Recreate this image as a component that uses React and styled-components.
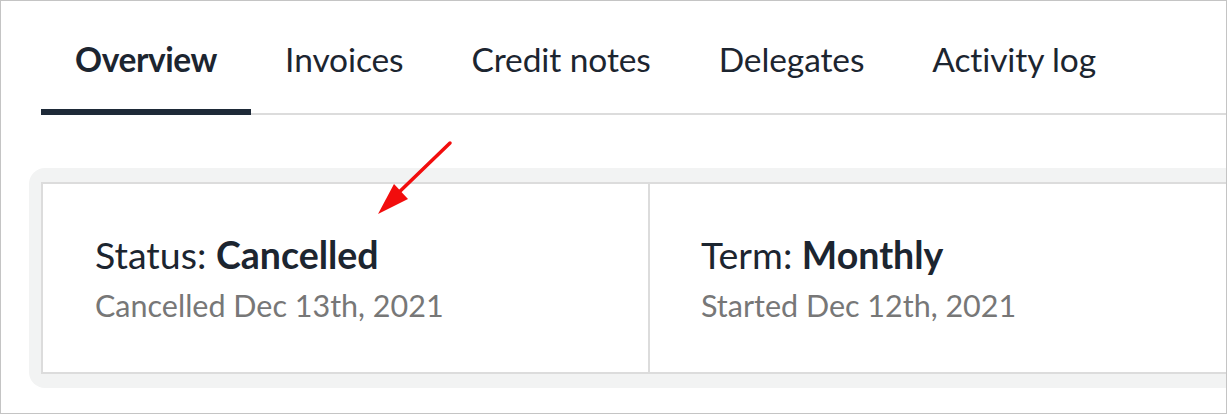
import React from "react";
import styled, { createGlobalStyle } from "styled-components";

const GlobalStyle = createGlobalStyle`
  * {
    box-sizing: border-box;
  }

  body {
    margin: 0;
    background: #ffffff;
    font-family: Lato, "Noto Sans", sans-serif;
    color: #1c2530;
  }
`;

const Frame = styled.div`
  position: relative;
  width: 1227px;
  height: 414px;
  border: 1px solid #c4c4c4;
  overflow: hidden;
  background: #ffffff;
`;

const TabBar = styled.nav`
  display: flex;
  margin-left: 40px;
  height: 114px;
  border-bottom: 2px solid #dcdcdc;
`;

const Tab = styled.div`
  display: flex;
  align-items: flex-end;
  padding: 0 34px 29px;
  margin-bottom: -2px;
  font-size: 33.5px;
  line-height: 42px;
  font-weight: ${(p) => (p.$active ? 700 : 400)};
  letter-spacing: ${(p) => (p.$active ? "-0.4px" : "-0.1px")};
  color: #1c2530;
  white-space: nowrap;
  border-bottom: 6px solid ${(p) => (p.$active ? "#1e2a38" : "transparent")};
`;

const Halo = styled.div`
  margin: 53px 0 0 28px;
  width: 1240px;
  padding: 14px 12px;
  background: #f2f3f3;
  border-radius: 16px;
`;

const Card = styled.div`
  display: flex;
  height: 192px;
  background: #ffffff;
  border: 2px solid #dcdcdc;
`;

const Cell = styled.div`
  display: flex;
  flex-direction: column;
  justify-content: center;
  width: ${(p) => (p.$first ? "605px" : "auto")};
  flex: ${(p) => (p.$first ? "none" : 1)};
  padding: 6px 0 0 ${(p) => (p.$first ? "52px" : "51px")};
  border-left: ${(p) => (p.$first ? "none" : "2px solid #dcdcdc")};
`;

const Title = styled.div`
  font-size: 37.5px;
  line-height: 48px;
  color: #1c2530;

  strong {
    font-weight: 700;
  }
`;

const Sub = styled.div`
  font-size: 30.5px;
  line-height: 52px;
  color: #777777;
`;

const Arrow = styled.svg`
  position: absolute;
  left: 370px;
  top: 136px;
  width: 90px;
  height: 84px;
  overflow: visible;
`;

const tabs = ["Overview", "Invoices", "Credit notes", "Delegates", "Activity log"];

const stats = [
  { label: "Status", value: "Cancelled", sub: "Cancelled Dec 13th, 2021" },
  { label: "Term", value: "Monthly", sub: "Started Dec 12th, 2021" },
];

export default function App() {
  return (
    <>
      <GlobalStyle />
      <Frame>
        <TabBar>
          {tabs.map((t, i) => (
            <Tab key={t} $active={i === 0}>
              {t}
            </Tab>
          ))}
        </TabBar>

        <Halo>
          <Card>
            {stats.map((s, i) => (
              <Cell key={s.label} $first={i === 0}>
                <Title>
                  {s.label}: <strong>{s.value}</strong>
                </Title>
                <Sub>{s.sub}</Sub>
              </Cell>
            ))}
          </Card>
        </Halo>

        <Arrow viewBox="370 136 90 84">
          <line x1="449" y1="142" x2="392" y2="197" stroke="#f20d0d" strokeWidth="3.5" strokeLinecap="round" />
          <polygon points="377,213 393,183 407,198" fill="#f20d0d" />
        </Arrow>
      </Frame>
    </>
  );
}
